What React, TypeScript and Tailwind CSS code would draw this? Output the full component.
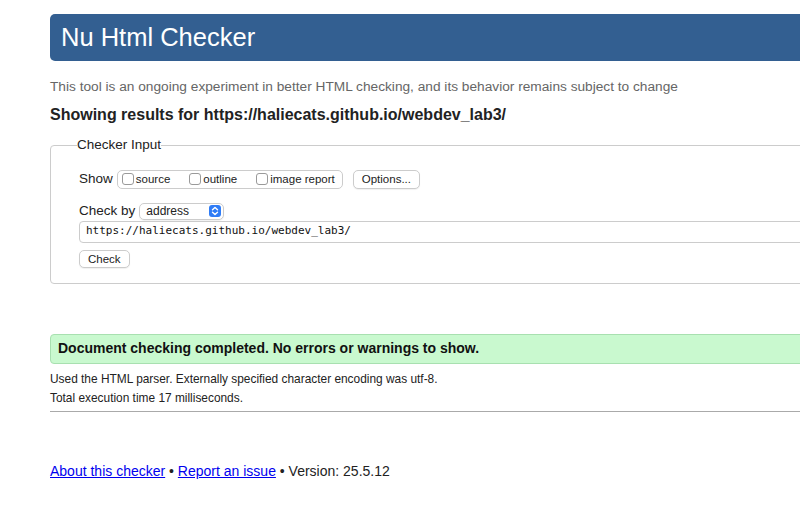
export default function App() {
  return (
    <div className="w-[800px] h-[532px] overflow-hidden bg-white font-['Liberation_Sans',Arial,sans-serif] text-[#222]">
      <div className="ml-[50px] w-[820px] pt-[14px]">
        <h1 className="h-[47px] rounded-[5px] bg-[#335f91] pl-[11px] text-[25.5px] leading-[47px] text-white">
          Nu Html Checker
        </h1>
        <p className="mt-[18px] text-[13.7px] leading-[16px] text-[#666]">
          This tool is an ongoing experiment in better HTML checking, and its behavior remains subject to change
        </p>
        <p className="mt-[10px] text-[16px] font-bold leading-[20px] text-[#222]">
          Showing results for https://haliecats.github.io/webdev_lab3/
        </p>

        <fieldset className="mt-[12px] rounded-[4px] border border-[#ccc] pb-[13px] pl-[28px]">
          <legend className="-ml-[2px] text-[13.5px] leading-[16px]">Checker Input</legend>
          <div className="mt-[16px] flex items-center">
            <span className="text-[13.5px]">Show</span>
            <div className="ml-[4px] flex h-[19px] items-center rounded-[5px] border border-[#ccc] pl-[4px] pr-[7px] text-[11.5px]">
              <Box />
              <span className="ml-[2px]">source</span>
              <span className="ml-[19px]">
                <Box />
              </span>
              <span className="ml-[2px]">outline</span>
              <span className="ml-[19px]">
                <Box />
              </span>
              <span className="ml-[2px]">image report</span>
            </div>
            <button className="ml-[10px] h-[19px] rounded-[5px] border border-[#ccc] bg-white px-[8px] text-[11.5px] leading-[17px] shadow-[0_1px_1px_rgba(0,0,0,0.06)]">
              Options...
            </button>
          </div>

          <div className="mt-[12px] flex items-center">
            <span className="text-[13.5px]">Check by</span>
            <div className="ml-[4px] flex h-[17px] w-[85px] items-center justify-between rounded-[5px] border border-[#ccc] pl-[6px] pr-[2px] text-[12px] shadow-[0_1px_1px_rgba(0,0,0,0.06)]">
              <span>address</span>
              <span className="flex h-[12px] w-[12px] items-center justify-center rounded-[3px] bg-[#2f7cf6]">
                <svg width="8" height="10" viewBox="0 0 8 10" fill="none" stroke="white" strokeWidth="1.4" strokeLinecap="round" strokeLinejoin="round">
                  <path d="M1.5 3.8 4 1.5l2.5 2.3" />
                  <path d="M1.5 6.2 4 8.5l2.5-2.3" />
                </svg>
              </span>
            </div>
          </div>

          <div className="-mt-[1px] flex h-[22px] items-center rounded-[4px] border border-[#ccc] pl-[6px] font-['DejaVu_Sans_Mono',Menlo,monospace] text-[11px] text-[#111]">
            https://haliecats.github.io/webdev_lab3/
          </div>

          <button className="mt-[7px] h-[18px] rounded-[5px] border border-[#ccc] bg-white px-[8px] text-[11.5px] leading-[16px] shadow-[0_1px_1px_rgba(0,0,0,0.06)]">
            Check
          </button>
        </fieldset>

        <div className="mt-[50px] flex h-[30px] items-center rounded-[4px] border border-[#a8e0b0] bg-[#c9f9cf] pl-[7px] text-[14px] font-bold text-[#111]">
          Document checking completed. No errors or warnings to show.
        </div>
        <p className="mt-[8px] text-[11.9px] leading-[14px]">
          Used the HTML parser. Externally specified character encoding was utf-8.
        </p>
        <p className="mt-[5px] text-[11.9px] leading-[14px]">Total execution time 17 milliseconds.</p>
        <hr className="mt-[6px] border-t border-[#aaa]" />

        <p className="mt-[51px] text-[14px] leading-[16px] text-[#222]">
          <a href="#" className="text-[#0000ee] underline">
            About this checker
          </a>{" "}
          •{" "}
          <a href="#" className="text-[#0000ee] underline">
            Report an issue
          </a>{" "}
          • Version: 25.5.12
        </p>
      </div>
    </div>
  );
}

function Box() {
  return <span className="block h-[12px] w-[12px] rounded-[3px] border border-[#9a9a9a] bg-white" />;
}
